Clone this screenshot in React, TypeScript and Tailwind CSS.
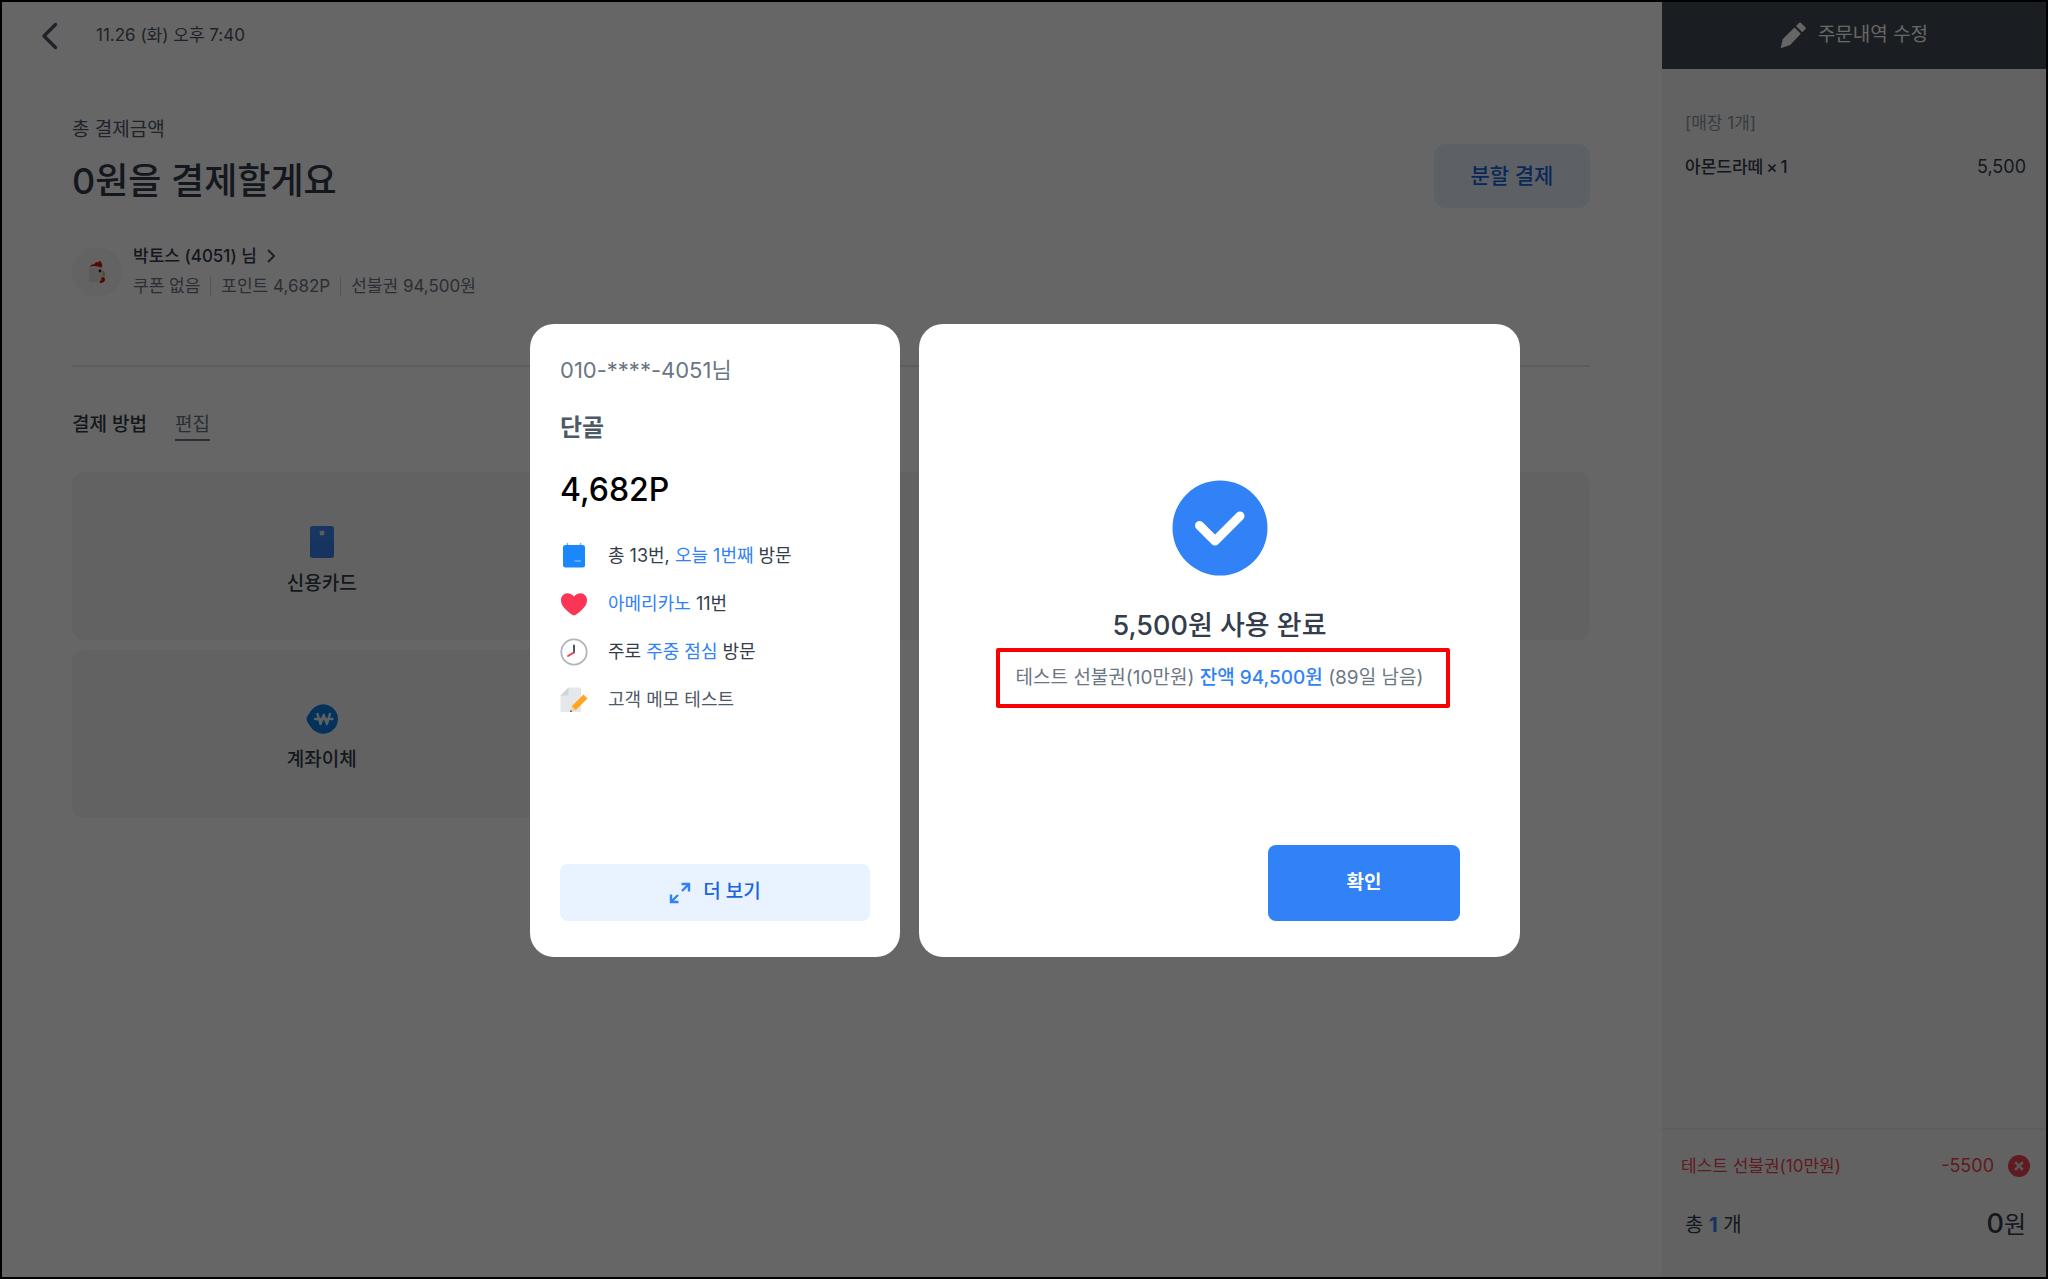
import type { ReactNode } from "react";

const VISITS: { icon: () => ReactNode; text: ReactNode; muted?: boolean }[] = [
  {
    icon: CalendarIcon,
    text: (
      <>
        총 13번, <span className="text-[#3182f6]">오늘 1번째</span> 방문
      </>
    ),
  },
  {
    icon: HeartIcon,
    text: (
      <>
        <span className="text-[#3182f6]">아메리카노</span> 11번
      </>
    ),
  },
  {
    icon: ClockIcon,
    text: (
      <>
        주로 <span className="text-[#3182f6]">주중 점심</span> 방문
      </>
    ),
  },
  { icon: MemoIcon, text: "고객 메모 테스트", muted: true },
];

const METHODS = [
  { label: "신용카드", icon: CardIcon },
  { label: "", icon: null },
  { label: "", icon: null },
  { label: "계좌이체", icon: TransferIcon },
];

function CalendarIcon() {
  return (
    <svg viewBox="0 0 28 28" className="size-7 shrink-0">
      <path d="M7.5 1.5v4M20.5 1.5v4" stroke="#6fb1ff" strokeWidth="1.5" strokeLinecap="round" />
      <rect x="3" y="3" width="22" height="22.5" rx="2.5" fill="#1b87fc" />
      <path d="M14.5 19h6.5" stroke="#8cc4ff" strokeWidth="1.2" />
    </svg>
  );
}

function HeartIcon() {
  return (
    <svg viewBox="0 0 28 28" className="size-7 shrink-0">
      <path
        d="M14 25.5c-.8 0-1.7-.5-2.6-1.2C5 19.3 1 15.3 1 10.2 1 6.3 3.8 3.3 7.4 3.3c2.7 0 5.1 1.3 6.6 3.3 1.5-2 3.9-3.3 6.6-3.3 3.6 0 6.4 3 6.4 6.9 0 5.1-4 9.1-10.4 14.1-.9.7-1.8 1.2-2.6 1.2Z"
        fill="#fa3556"
      />
    </svg>
  );
}

function ClockIcon() {
  return (
    <svg viewBox="0 0 28 28" className="size-7 shrink-0" fill="none" strokeLinecap="round">
      <circle cx="14" cy="14" r="12.7" stroke="#b0b5bb" strokeWidth="1.8" />
      <path d="M14 7.5V14.5" stroke="#3c4450" strokeWidth="1.8" />
      <path d="M13.8 14.4l-5.8 3.6" stroke="#ef3b52" strokeWidth="1.8" />
    </svg>
  );
}

function MemoIcon() {
  return (
    <svg viewBox="0 0 28 28" className="size-7 shrink-0">
      <path d="M8.5 1.5H21V26H.5V9.5Z" fill="#e5e8eb" />
      <path d="M8.5 1.5v6a2 2 0 0 1-2 2h-6Z" fill="#d0d5da" />
      <path d="M23.5 8.5l4 4L15.7 24.3l-4-4Z" fill="#ffa51f" />
      <path d="M11.7 20.3l4 4-5.2 1.7Z" fill="#fbd3a2" />
      <circle cx="11" cy="25.2" r="0.9" fill="#4e5968" />
    </svg>
  );
}

function CardIcon() {
  return (
    <svg viewBox="0 0 24 32" className="h-8 w-6">
      <defs>
        <linearGradient id="card" x1="0" y1="0" x2="0" y2="1">
          <stop offset="0.4" stopColor="#3f85f5" />
          <stop offset="0.5" stopColor="#3b7ff0" />
        </linearGradient>
      </defs>
      <rect width="24" height="32" rx="2.5" fill="url(#card)" />
      <rect x="9.7" y="4.7" width="4.6" height="4.6" rx="0.8" fill="#dfe6f3" />
    </svg>
  );
}

function TransferIcon() {
  return (
    <svg viewBox="0 0 32 30" className="h-[30px] w-8" fill="none">
      <path
        d="M17.3.3A14.7 14.7 0 1 1 8.5 26.8C5.8 24.7 3.6 21.7 1.2 17.4c-.9-1.6-.9-3.2 0-4.8C3.6 8.3 5.8 5.3 8.5 3.2A14.7 14.7 0 0 1 17.3.3Z"
        fill="#0a7ee0"
      />
      <path
        d="M11.5 10l3 10 3.2-9 3.2 9 3-10M9 15h17.5"
        stroke="#e6eef8"
        strokeWidth="2.4"
        strokeLinecap="round"
        strokeLinejoin="round"
      />
    </svg>
  );
}

function ChickenIcon() {
  return (
    <svg viewBox="0 0 18 24" className="h-6 w-[18px]">
      <path d="M1 8q6-3 14 0l1 8q-1 6-8 6H1Z" fill="#e9e4df" />
      <path d="M1.5 6.5Q3 4 6.5 4 8 1 10 2.5 12-.5 13.5 3q1.5 2 0 4.5-6-2.5-12-1Z" fill="#d9160c" />
      <path d="M13.5 17.5q3.5-1.5 3.5 2 0 3-4 3.5-1.5.5-1.5-1 2-1.5 2-4.5Z" fill="#d9160c" />
      <path d="M14.5 10q3 2.5 2.5 6h-2.5Z" fill="#cdb77b" />
      <circle cx="12" cy="11" r="1.4" fill="#222" />
    </svg>
  );
}

function PencilIcon() {
  return (
    <svg viewBox="0 0 26 27" className="h-[27px] w-[26px]" fill="#fff">
      <path d="M14.5 5.5l6.3 6.3L10.2 23 .6 26.3 2.8 17Z" />
      <path d="M16 4l3-3q1-1 2 0l4.3 4.3q1 1 0 2l-3 3Z" />
    </svg>
  );
}

export default function App() {
  return (
    <div className="relative flex min-h-screen border-2 border-black bg-white font-['Inter','Noto_Sans_CJK_KR',sans-serif] text-[#333d4b]">
      <main className="min-w-0 flex-1 pr-[72px] pl-[70px]">
        <header className="-ml-8 flex h-[68px] items-center gap-[38px]">
          <button type="button" aria-label="뒤로">
            <svg
              viewBox="0 0 18 28"
              className="h-7 w-[18px]"
              fill="none"
              stroke="#4e5968"
              strokeWidth="3.4"
              strokeLinecap="round"
              strokeLinejoin="round"
            >
              <path d="M15.5 2.5L4 14l11.5 11.5" />
            </svg>
          </button>
          <time className="text-[17px] text-[#4e5968]">11.26 (화) 오후 7:40</time>
        </header>

        <section className="flex items-end justify-between pt-12">
          <div>
            <p className="text-[19px] leading-6 text-[#4e5968]">총 결제금액</p>
            <h1 className="mt-3 text-4xl leading-[54px] font-medium">0원을 결제할게요</h1>
          </div>
          <button type="button" className="h-16 w-[156px] rounded-xl bg-[#e8f3ff] text-[21px] font-medium text-[#1b64da]">
            분할 결제
          </button>
        </section>

        <section className="mt-[34px] flex items-center gap-[11px]">
          <div className="flex size-[50px] items-center justify-center rounded-full bg-[#f7f7f7]">
            <ChickenIcon />
          </div>
          <div>
            <button type="button" className="flex items-center gap-2.5 text-[17px] leading-7 font-medium">
              박토스 (4051) 님
              <svg viewBox="0 0 8 14" className="h-3.5 w-2" fill="none" stroke="#4e5968" strokeWidth="2">
                <path d="M1 1l6 6-6 6" />
              </svg>
            </button>
            <p className="flex items-center gap-2.5 text-[17px] leading-8 text-[#6b7684]">
              <span>쿠폰 없음</span>
              <span className="h-5 w-px bg-[#d1d6db]" />
              <span>포인트 4,682P</span>
              <span className="h-5 w-px bg-[#d1d6db]" />
              <span>선불권 94,500원</span>
            </p>
          </div>
        </section>

        <hr className="mt-[63px] border-t-2 border-[#e5e8eb]" />

        <section className="pt-11">
          <div className="flex items-start gap-7 text-[19px] leading-7">
            <h2 className="font-medium">결제 방법</h2>
            <button type="button" className="border-b-2 border-[#6b7684] text-[#6b7684]">
              편집
            </button>
          </div>
          <div className="mt-[31px] grid grid-cols-3 gap-2.5">
            {METHODS.map(({ label, icon: Icon }, i) => (
              <button
                key={i}
                type="button"
                className="flex h-[168px] flex-col items-center gap-3 rounded-xl bg-[#f6f6f6] pt-[54px] text-[19px] leading-7 font-medium"
              >
                {Icon && <Icon />}
                {label}
              </button>
            ))}
          </div>
        </section>
      </main>

      <aside className="flex w-[384px] shrink-0 flex-col bg-[#f6f6f6]">
        <button type="button" className="flex h-[67px] items-center justify-center gap-3 bg-[#434b55] text-[19px] text-white">
          <PencilIcon />
          주문내역 수정
        </button>
        <div className="flex-1 pt-10 pr-5 pl-[23px] text-[17px] leading-7">
          <p className="text-[#8b95a1]">[매장 1개]</p>
          <p className="mt-4 flex justify-between">
            <span className="flex gap-[3px] font-medium">
              아몬드라떼 <span>×</span> <span>1</span>
            </span>
            <span className="text-lg leading-7">5,500</span>
          </p>
        </div>
        <footer className="border-t-2 border-[#e5e8eb] pt-5 pr-4 pb-[34px] pl-[19px]">
          <div className="flex items-center text-[17px] leading-8 text-[#f04452]">
            <span>테스트 선불권(10만원)</span>
            <span className="ml-auto text-lg leading-8">-5500</span>
            <button type="button" aria-label="선불권 취소" className="ml-3.5">
              <svg viewBox="0 0 22 22" className="size-[22px]">
                <circle cx="11" cy="11" r="11" fill="#f04452" />
                <path d="M7.2 7.2l7.6 7.6M14.8 7.2l-7.6 7.6" stroke="#ddd" strokeWidth="2.6" />
              </svg>
            </button>
          </div>
          <div className="mt-6 flex items-center justify-between px-1 leading-9">
            <p className="text-xl leading-9">
              총 <b className="text-[#3182f6]">1</b> 개
            </p>
            <p className="text-2xl leading-9">
              <span className="text-[27px] font-medium">0</span>원
            </p>
          </div>
        </footer>
      </aside>

      <div className="absolute inset-0 flex items-center justify-center gap-[19px] bg-black/60 pt-0.5 pl-0.5">
        <section className="flex h-[633px] w-[370px] flex-col rounded-3xl bg-white px-[30px] pt-8 pb-9">
          <p className="text-[22px] leading-7 text-[#6b7684]">010-****-4051님</p>
          <h2 className="mt-[26px] text-2xl leading-9 font-semibold text-[#4e5968]">단골</h2>
          <p className="mt-6 text-[32px] leading-10 font-medium text-black">4,682P</p>
          <ul className="mt-8 flex flex-col gap-5 text-lg leading-7">
            {VISITS.map(({ icon: Icon, text, muted }, i) => (
              <li key={i} className="flex items-center gap-5">
                <Icon />
                <span className={muted ? "text-[#4e5968]" : ""}>{text}</span>
              </li>
            ))}
          </ul>
          <button
            type="button"
            className="mt-auto flex h-[57px] items-center justify-center gap-3 rounded-lg bg-[#e8f3ff] text-[19px] font-medium text-[#1b64da]"
          >
            <svg viewBox="0 0 22 22" className="size-[22px]" fill="none" stroke="#3182f6" strokeWidth="2.4">
              <path d="M12.5 2H20v7.5M20 2l-7 7M2 12.5V20h7.5M2 20l7-7" />
            </svg>
            더 보기
          </button>
        </section>

        <section
          role="dialog"
          aria-modal="true"
          aria-labelledby="done"
          className="flex h-[633px] w-[601px] flex-col items-center rounded-3xl bg-white px-[60px] pt-[156px] pb-9"
        >
          <svg viewBox="0 0 96 96" className="size-24 shrink-0">
            <circle cx="48" cy="48" r="47.5" fill="#3182f6" />
            <path
              d="M27.5 45.5L43 61 68 36"
              fill="none"
              stroke="#fff"
              strokeWidth="9"
              strokeLinecap="round"
              strokeLinejoin="round"
            />
          </svg>
          <h2 id="done" className="mt-7 text-[27px] leading-11 font-medium">
            5,500원 사용 완료
          </h2>
          <p className="relative mt-4 text-[19px] leading-7 whitespace-nowrap text-[#6b7684]">
            테스트 선불권(10만원) <span className="font-medium text-[#3182f6]">잔액 94,500원</span> (89일 남음)
            {/* highlight frame around the balance line */}
            <span className="absolute -inset-y-4 -right-[27px] -left-5 rounded-xs border-4 border-[#fa0000]" />
          </p>
          <button
            type="button"
            className="mt-auto h-[76px] w-48 self-end rounded-lg bg-[#3182f6] text-[19px] font-semibold text-white"
          >
            확인
          </button>
        </section>
      </div>
    </div>
  );
}
